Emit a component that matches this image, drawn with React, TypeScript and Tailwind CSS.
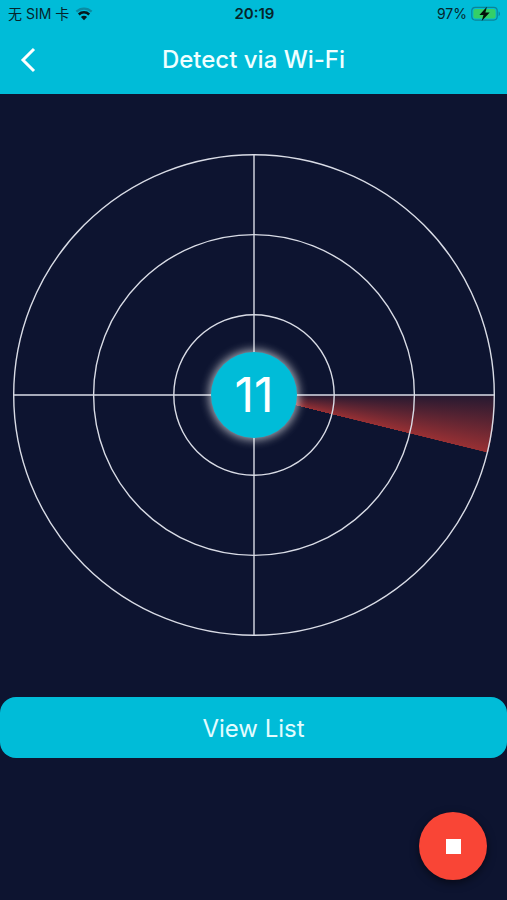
import { ReactNode } from "react"

interface StatusBarProps {
  carrier: string
  time: string
  battery: number
}

const WifiIcon = () => (
  <svg width="18" height="14" viewBox="0 0 18 14" fill="none" aria-hidden="true">
    <path d="M1.4 4.6a11 11 0 0 1 15.2 0" stroke="#0a8ba2" strokeWidth="2.2" />
    <path d="M3.8 7.5a7.4 7.4 0 0 1 10.4 0" stroke="#06191d" strokeWidth="2.5" />
    <path d="M9 13.2 5.9 10.1a4.4 4.4 0 0 1 6.2 0z" fill="#06191d" />
  </svg>
)

const BatteryIcon = () => (
  <svg width="30" height="16" viewBox="0 0 30 16" aria-hidden="true">
    <rect x="0.8" y="1.3" width="25.4" height="12.8" rx="3.5" fill="none" stroke="#0b8598" strokeWidth="1.2" />
    <rect x="2.4" y="2.9" width="22.2" height="9.6" rx="2" fill="#34cf68" />
    <path d="M27.6 5.4c1.8.7 1.8 3.9 0 4.6z" fill="#0b8598" />
    <path d="M15.9 0.8 8.4 8.9h4.1l-1.8 6.1 8-8.5h-4.3z" fill="#04110a" />
  </svg>
)

const StatusBar = (props: StatusBarProps) => {
  const { carrier, time, battery } = props
  return (
    <div className="grid h-7 grid-cols-3 items-center pl-2 pr-1.5 text-sm text-[#06252b]">
      <div className="flex items-center gap-1.5">
        <span>{carrier}</span>
        <WifiIcon />
      </div>
      <span className="text-center text-[15px] font-semibold">{time}</span>
      <div className="flex items-center justify-end gap-1">
        <span>{battery}%</span>
        <BatteryIcon />
      </div>
    </div>
  )
}

const NavBar = ({ children }: { children: ReactNode }) => (
  <div className="grid h-[66px] grid-cols-[56px_1fr_56px] items-center pb-0.5">
    <button type="button" aria-label="Back" className="flex h-12 items-center justify-center">
      <svg width="18" height="26" viewBox="0 0 18 26" fill="none" aria-hidden="true">
        <path d="M15 2 4 13l11 11" stroke="white" strokeWidth="3" />
      </svg>
    </button>
    <h1 className="text-center text-2xl font-medium text-[#f0ffff]">{children}</h1>
  </div>
)

const Radar = ({ count }: { count: number }) => (
  <div className="relative flex aspect-square w-full items-center justify-center">
    <div className="absolute inset-0 rounded-full bg-[conic-gradient(from_90deg,rgb(244_67_54/0.1)_0deg,rgb(244_67_54/0.6)_13.8deg,transparent_13.9deg)]" />
    <svg
      className="absolute inset-0 h-full w-full"
      viewBox="0 0 482 482"
      fill="none"
      stroke="#d9dce6"
      strokeWidth="1.4"
      aria-hidden="true"
    >
      <circle cx="241" cy="241" r="80.2" />
      <circle cx="241" cy="241" r="160.4" />
      <circle cx="241" cy="241" r="240.3" />
      <path d="M241 1v480M1 241h480" />
    </svg>
    <div className="relative flex size-[86px] items-center justify-center rounded-full bg-[#00bcd8] text-5xl text-white shadow-[0_0_10px_2px_rgb(255_255_255/0.65)]">
      {count}
    </div>
  </div>
)

const App = () => {
  return (
    <div className="flex min-h-screen flex-col bg-[#0d1430] font-['Inter','Noto_Sans_CJK_SC',sans-serif]">
      <header className="bg-[#00bcd8]">
        <StatusBar carrier="无 SIM 卡" time="20:19" battery={97} />
        <NavBar>Detect via Wi-Fi</NavBar>
      </header>
      <main className="flex grow flex-col pt-15">
        <div className="pl-[13px] pr-3">
          <Radar count={11} />
        </div>
        <button type="button" className="mt-[61px] h-[61px] w-full rounded-2xl bg-[#00bcd8] pt-0.5 text-2xl text-[#e4fcff]">
          View List
        </button>
        <button
          type="button"
          aria-label="Stop"
          className="mr-5 mb-5 mt-auto flex size-[68px] items-center justify-center self-end rounded-full bg-[#f94536] shadow-[0_3px_8px_rgb(0_0_0/0.5)]"
        >
          <span className="size-[15px] bg-white" />
        </button>
      </main>
    </div>
  )
}

export default App
